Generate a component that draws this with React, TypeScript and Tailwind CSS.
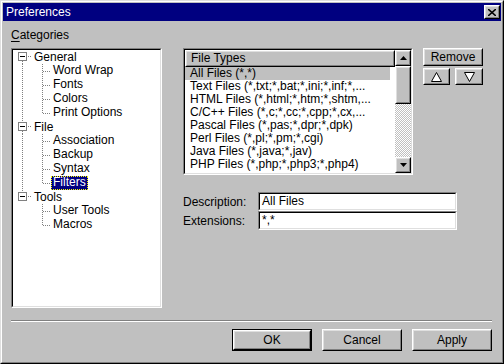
import React from 'react';

type Node = { label: string; level: 0 | 1; kind: 'root' | 'child' | 'lastChild'; trunk?: boolean; topLine?: boolean; bottomLine?: boolean; selected?: boolean };

const tree: Node[] = [
  { label: 'General', level: 0, kind: 'root', topLine: false, bottomLine: true },
  { label: 'Word Wrap', level: 1, kind: 'child', trunk: true },
  { label: 'Fonts', level: 1, kind: 'child', trunk: true },
  { label: 'Colors', level: 1, kind: 'child', trunk: true },
  { label: 'Print Options', level: 1, kind: 'lastChild', trunk: true },
  { label: 'File', level: 0, kind: 'root', topLine: true, bottomLine: true },
  { label: 'Association', level: 1, kind: 'child', trunk: true },
  { label: 'Backup', level: 1, kind: 'child', trunk: true },
  { label: 'Syntax', level: 1, kind: 'child', trunk: true },
  { label: 'Filters', level: 1, kind: 'lastChild', trunk: true, selected: true },
  { label: 'Tools', level: 0, kind: 'root', topLine: true, bottomLine: false },
  { label: 'User Tools', level: 1, kind: 'child', trunk: false },
  { label: 'Macros', level: 1, kind: 'lastChild', trunk: false },
];

const fileTypes = [
  'All Files (*,*)',
  'Text Files (*,txt;*,bat;*,ini;*,inf;*,...',
  'HTML Files (*,html;*,htm;*,shtm,...',
  'C/C++ Files (*,c;*,cc;*,cpp;*,cx,...',
  'Pascal Files (*,pas;*,dpr;*,dpk)',
  'Perl Files (*,pl;*,pm;*,cgi)',
  'Java Files (*,java;*,jav)',
  'PHP Files (*,php;*,php3;*,php4)',
];

const DOT = '#808080';

function Raised({ className = '', children, def }: { className?: string; children?: React.ReactNode; def?: boolean }) {
  const inner = (
    <div className="w-full h-full border border-t-white border-l-white border-b-black border-r-black">
      <div className="w-full h-full flex items-center justify-center border border-t-[#dfdfdf] border-l-[#dfdfdf] border-b-[#808080] border-r-[#808080] bg-[#c0c0c0]">
        {children}
      </div>
    </div>
  );
  if (def) return <div className={`border border-black ${className}`}>{inner}</div>;
  return <div className={className}>{inner}</div>;
}

function Sunken({ className = '', children }: { className?: string; children?: React.ReactNode }) {
  return (
    <div className={`border border-t-[#808080] border-l-[#808080] border-b-white border-r-white ${className}`}>
      <div className="w-full h-full border border-t-black border-l-black border-b-[#dfdfdf] border-r-[#dfdfdf] bg-white overflow-hidden">
        {children}
      </div>
    </div>
  );
}

function TreeRow({ n }: { n: Node }) {
  if (n.level === 0) {
    return (
      <div className="flex h-[14px] items-center">
        <svg width="19" height="14" className="shrink-0">
          {n.topLine && <line x1="9.5" y1="0" x2="9.5" y2="2" stroke={DOT} strokeDasharray="1 1" />}
          {n.bottomLine && <line x1="9.5" y1="11" x2="9.5" y2="14" stroke={DOT} strokeDasharray="1 1" />}
          <rect x="5.5" y="2.5" width="8" height="8" fill="white" stroke={DOT} />
          <line x1="7" y1="6.5" x2="12" y2="6.5" stroke="black" />
          <line x1="15" y1="6.5" x2="19" y2="6.5" stroke={DOT} strokeDasharray="1 1" />
        </svg>
        <span className="px-[2px] leading-[14px]">{n.label}</span>
      </div>
    );
  }
  return (
    <div className="flex h-[14px] items-center">
      <svg width="38" height="14" className="shrink-0">
        {n.trunk && <line x1="9.5" y1="0" x2="9.5" y2="14" stroke={DOT} strokeDasharray="1 1" />}
        <line x1="29.5" y1="0" x2="29.5" y2={n.kind === 'lastChild' ? 7 : 14} stroke={DOT} strokeDasharray="1 1" />
        <line x1="30" y1="7.5" x2="38" y2="7.5" stroke={DOT} strokeDasharray="1 1" />
      </svg>
      <span
        className={`px-[2px] leading-[13px] h-[14px] ${
          n.selected ? 'bg-[#000080] text-white outline outline-1 outline-dotted outline-[#ffff00] -outline-offset-1' : ''
        }`}
      >
        {n.label}
      </span>
    </div>
  );
}

function Tri({ dir, size = 'small' }: { dir: 'up' | 'down'; size?: 'small' | 'big' }) {
  if (size === 'small') {
    return (
      <svg width="7" height="4">
        {dir === 'up' ? <polygon points="3.5,0 7,4 0,4" fill="black" /> : <polygon points="0,0 7,0 3.5,4" fill="black" />}
      </svg>
    );
  }
  return (
    <svg width="11" height="10">
      {dir === 'up' ? (
        <polygon points="5.5,0.5 10.5,9.5 0.5,9.5" fill="white" stroke="black" />
      ) : (
        <polygon points="0.5,0.5 10.5,0.5 5.5,9.5" fill="white" stroke="black" />
      )}
    </svg>
  );
}

export default function App() {
  return (
    <div className="w-[504px] h-[364px] bg-[#c0c0c0] font-['Liberation_Sans',Arial,sans-serif] text-[12px] text-black select-none">
      <div className="w-full h-full border border-t-[#dfdfdf] border-l-[#dfdfdf] border-b-black border-r-black">
        <div className="w-full h-full border border-t-white border-l-white border-b-[#808080] border-r-[#808080] p-[1px] flex flex-col">
          {/* title bar */}
          <div className="h-[18px] bg-[#000080] flex items-center justify-between pl-[3px] pr-[1px]">
            <span className="text-white text-[12px] leading-[18px]">Preferences</span>
            <Raised className="w-[16px] h-[14px]">
              <svg width="8" height="7">
                <path d="M0 0 L8 7 M8 0 L0 7" stroke="black" strokeWidth="1.6" />
              </svg>
            </Raised>
          </div>

          <div className="pl-[8px] pr-[9px] flex flex-col">
            <div className="mt-[7px] leading-[14px]">
              <span className="underline underline-offset-2">C</span>ategories
            </div>

            <div className="mt-[6px] flex">
              <Sunken className="w-[151px] h-[260px]">
                <div className="flex flex-col">
                  {tree.map((n) => (
                    <TreeRow key={n.label} n={n} />
                  ))}
                </div>
              </Sunken>

              <div className="ml-[21px] flex flex-col">
                <div className="flex">
                  <Sunken className="w-[230px] h-[127px]">
                    <div className="flex h-full">
                      <div className="w-[210px] flex flex-col">
                        <Raised className="h-[17px] w-full">
                          <div className="w-full pl-[4px] leading-[13px]">File Types</div>
                        </Raised>
                        {fileTypes.map((t, i) => (
                          <div
                            key={t}
                            className={`h-[13px] leading-[13px] pl-[5px] whitespace-nowrap overflow-hidden w-[205px] ${
                              i === 0 ? 'bg-[#c0c0c0]' : ''
                            }`}
                          >
                            {t}
                          </div>
                        ))}
                      </div>
                      <div className="w-[16px] flex flex-col">
                        <Raised className="h-[16px]">
                          <Tri dir="up" />
                        </Raised>
                        <Raised className="h-[38px]" />
                        <div className="flex-1 bg-[repeating-conic-gradient(#ffffff_0_25%,#c0c0c0_0_50%)] bg-[length:2px_2px]" />
                        <Raised className="h-[16px]">
                          <Tri dir="down" />
                        </Raised>
                      </div>
                    </div>
                  </Sunken>

                  <div className="ml-[10px] flex flex-col">
                    <Raised className="w-[60px] h-[18px]">
                      <span className="leading-[14px]">Remove</span>
                    </Raised>
                    <div className="mt-[2px] flex gap-[5px]">
                      <Raised className="w-[27px] h-[17px]">
                        <Tri dir="up" size="big" />
                      </Raised>
                      <Raised className="w-[28px] h-[17px]">
                        <Tri dir="down" size="big" />
                      </Raised>
                    </div>
                  </div>
                </div>

                <div className="mt-[17px] flex items-center h-[19px]">
                  <span className="w-[75px]">Description:</span>
                  <Sunken className="w-[199px] h-[19px]">
                    <div className="pl-[2px] leading-[15px]">All Files</div>
                  </Sunken>
                </div>
                <div className="flex items-center h-[19px]">
                  <span className="w-[75px]">Extensions:</span>
                  <Sunken className="w-[199px] h-[19px]">
                    <div className="pl-[2px] leading-[15px]">*,*</div>
                  </Sunken>
                </div>
              </div>
            </div>

            <div className="mt-[12px] border-t border-t-[#808080] border-b border-b-white" />

            <div className="mt-[7px] flex justify-end gap-[10px]">
              <Raised def className="w-[80px] h-[22px]">
                OK
              </Raised>
              <Raised className="w-[80px] h-[22px]">Cancel</Raised>
              <Raised className="w-[80px] h-[22px]">Apply</Raised>
            </div>
          </div>
        </div>
      </div>
    </div>
  );
}
